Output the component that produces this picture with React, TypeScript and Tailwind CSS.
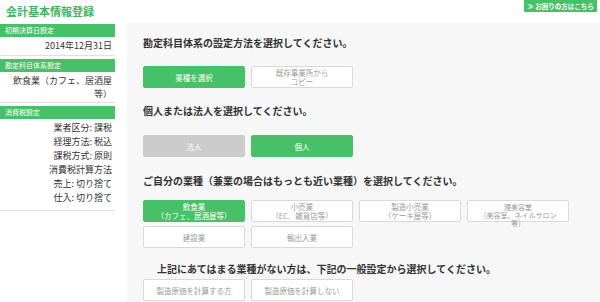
import React from "react";

const G = "bg-[#47c167] text-white border border-[#47c167]";
const W = "bg-white text-[#9a9a9a] border border-[#d9d9d9]";
const D = "bg-[#cccccc] text-white border border-[#cccccc]";

function Btn({ kind, children }: { kind: string; children: React.ReactNode }) {
  return (
    <div className={`${kind} h-[22px] w-[102px] rounded-[2px] flex flex-col items-center justify-center text-center text-[7.5px] leading-[9px] shrink-0`}>
      {children}
    </div>
  );
}

function SideHead({ children }: { children: React.ReactNode }) {
  return <div className="h-[13px] bg-[#47c167] text-white text-[7px] leading-[13px] pl-[5px]">{children}</div>;
}

export default function App() {
  return (
    <div className="w-[600px] h-[302px] bg-white overflow-hidden font-['Noto_Sans_CJK_JP',sans-serif] text-[#333]">
      <div className="h-[22px] flex justify-between">
        <h1 className="text-[11px] font-bold text-[#3fb55b] pl-[6px] pt-[3px] leading-[16px]">会計基本情報登録</h1>
        <div className="mr-[3px] h-[12px] w-[73px] bg-[#47c167] text-white text-[6.5px] leading-[12px] font-bold rounded-b-[1px] flex items-center justify-center">
          ≫ お困りの方はこちら
        </div>
      </div>
      <div className="flex h-[280px]">
        <aside className="w-[115px] pt-[2px] text-[9px] leading-[13px] text-[#333]">
          <SideHead>初期決算日設定</SideHead>
          <div className="text-right pr-[3px] pt-[2px] pb-[3px] border-b border-[#e0e0e0]">2014年12月31日</div>
          <div className="h-[3px]" />
          <SideHead>勘定科目体系設定</SideHead>
          <div className="text-right pr-[3px] pt-[2px] pb-[2px] border-b border-[#e0e0e0]">
            飲食業（カフェ、居酒屋
            <br />
            等）
          </div>
          <div className="h-[3px]" />
          <SideHead>消費税設定</SideHead>
          <div className="text-right pr-[3px] pt-[2px] pb-[5px] border-b border-[#e0e0e0] leading-[14px]">
            <div>業者区分: 課税</div>
            <div>経理方法: 税込</div>
            <div>課税方式: 原則</div>
            <div>消費税計算方法</div>
            <div>売上: 切り捨て</div>
            <div>仕入: 切り捨て</div>
          </div>
        </aside>
        <main className="ml-[12px] flex-1 bg-[#f7f7f7] pl-[16px] pt-[14px]">
          <p className="text-[10px] font-bold leading-[14px]">勘定科目体系の設定方法を選択してください。</p>
          <div className="flex gap-[6px] mt-[16px]">
            <Btn kind={G}>業種を選択</Btn>
            <Btn kind={W}>
              <span>既存事業所から</span>
              <span>コピー</span>
            </Btn>
          </div>
          <p className="text-[10px] font-bold leading-[14px] mt-[16px]">個人または法人を選択してください。</p>
          <div className="flex gap-[6px] mt-[17px]">
            <Btn kind={D}>法人</Btn>
            <Btn kind={G}>個人</Btn>
          </div>
          <p className="text-[10px] font-bold leading-[14px] mt-[17px]">ご自分の業種（兼業の場合はもっとも近い業種）を選択してください。</p>
          <div className="flex gap-[6px] mt-[12px]">
            <Btn kind={G}>
              <span>飲食業</span>
              <span>（カフェ、居酒屋等）</span>
            </Btn>
            <Btn kind={W}>
              <span>小売業</span>
              <span>（EC、雑貨店等）</span>
            </Btn>
            <Btn kind={W}>
              <span>製造小売業</span>
              <span>（ケーキ屋等）</span>
            </Btn>
            <div className={`${W} h-[22px] w-[102px] rounded-[2px] flex flex-col items-center text-center text-[7px] leading-[8px] pt-[2px] shrink-0`}>
              <span>理美容業</span>
              <span>（美容室、ネイルサロン</span>
              <span>等）</span>
            </div>
          </div>
          <div className="flex gap-[6px] mt-[4px]">
            <Btn kind={W}>建設業</Btn>
            <Btn kind={W}>輸出入業</Btn>
          </div>
          <p className="text-[10px] font-bold leading-[14px] mt-[14px] pl-[14px]">上記にあてはまる業種がない方は、下記の一般設定から選択してください。</p>
          <div className="flex gap-[6px] mt-[3px]">
            <Btn kind={W}>製造原価を計算する方</Btn>
            <Btn kind={W}>製造原価を計算しない</Btn>
          </div>
        </main>
      </div>
    </div>
  );
}
